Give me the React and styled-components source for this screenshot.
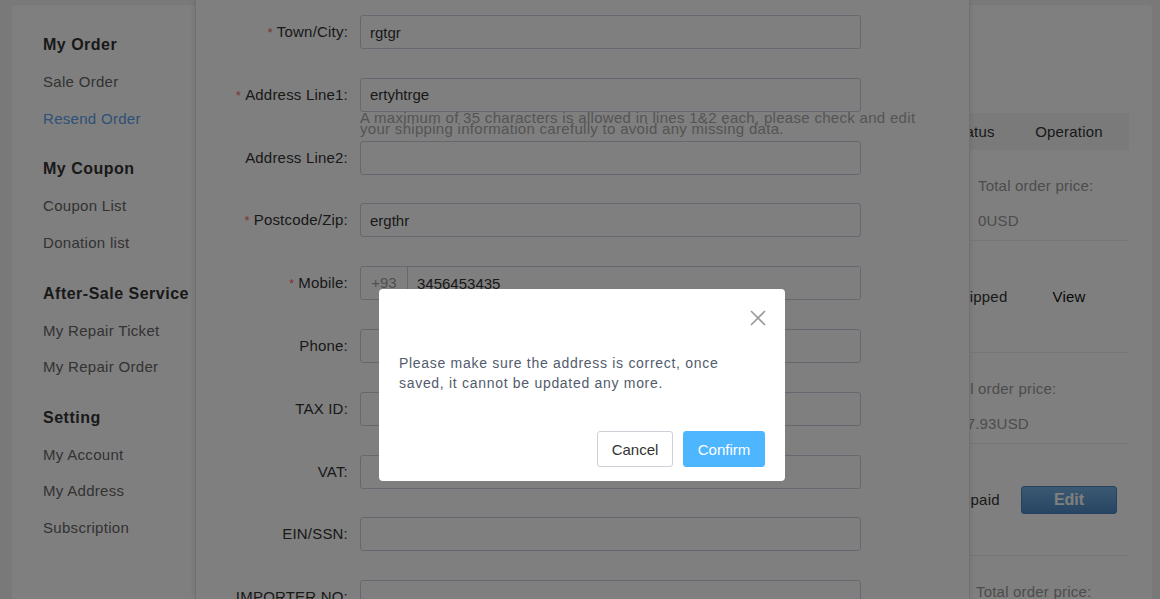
import React from "react";
import styled, { createGlobalStyle } from "styled-components";

const GlobalStyle = createGlobalStyle`
  html, body {
    margin: 0;
    height: 100%;
  }
  body {
    font-family: "Liberation Sans", Arial, sans-serif;
    background: #f3f3f3;
    overflow: hidden;
  }
  * {
    box-sizing: border-box;
  }
`;

const Page = styled.div`
  position: relative;
  display: flex;
  gap: 10px;
  height: 100vh;
  padding: 5px 8px 0 12px;
  overflow: hidden;
`;

/* ---------- sidebar ---------- */

const Sidebar = styled.nav`
  flex: none;
  width: 183px;
  background: #fff;
  border-radius: 4px 4px 0 0;
  padding: 30px 0 0 31px;
`;

const Section = styled.div`
  margin-bottom: 22.3px;
`;

const SectionTitle = styled.h3`
  margin: 0 0 9px;
  font-size: 16px;
  line-height: 20px;
  font-weight: 700;
  letter-spacing: 0.5px;
  color: #333;
  white-space: nowrap;
`;

const NavItem = styled.a`
  display: block;
  height: 36.5px;
  line-height: 36.5px;
  font-size: 15px;
  letter-spacing: 0.3px;
  color: ${props => (props.$active ? "#5aa2ee" : "#666")};
  text-decoration: none;
  white-space: nowrap;
`;

/* ---------- order list card ---------- */

const MainCard = styled.main`
  flex: 1;
  background: #fff;
  border-radius: 4px 4px 0 0;
  padding: 0 23px 0 24px;
`;

const CardTop = styled.div`
  height: 108px;
  padding-top: 30px;
  font-size: 18px;
  color: #333;
`;

const TableHead = styled.div`
  display: grid;
  grid-template-columns: 1fr 58px 120px;
  align-items: center;
  height: 37px;
  background: #f5f5f5;
  font-size: 15px;
  color: #333;
  letter-spacing: 0.2px;
`;

const HeadCell = styled.div`
  text-align: ${props => (props.$left ? "left" : "center")};
`;

const PriceBlock = styled.div`
  padding: 18px 0 2px ${props => props.$indent}px;
  border-bottom: 1px solid #eee;
  font-size: 15px;
  line-height: 35px;
  color: #999;
  letter-spacing: 0.2px;
`;

const StatusRow = styled.div`
  display: grid;
  grid-template-columns: 1fr 58px 120px;
  align-items: center;
  height: 112px;
  border-bottom: 1px solid #eee;
  font-size: 15px;
  color: #333;
  letter-spacing: 0.2px;
`;

const Cell = styled.div`
  display: flex;
  justify-content: ${props => (props.$left ? "flex-start" : "center")};
  white-space: nowrap;
  color: ${props => (props.$strong ? "#111" : "#333")};
`;

const EditButton = styled.button`
  width: 96px;
  height: 28px;
  border: 1px solid #4a86bd;
  border-radius: 3px;
  background: linear-gradient(#78b2e6, #4f8cc6);
  color: #fff;
  font-family: inherit;
  font-size: 16px;
  font-weight: 700;
`;

/* ---------- address form panel (lies over the list) ---------- */

const FormPanel = styled.section`
  position: absolute;
  top: 0;
  left: 195px;
  width: 775px;
  height: 100%;
  background: #fff;
  border-left: 1px solid #e2e2e2;
  border-right: 1px solid #e2e2e2;
  box-shadow: 0 0 6px rgba(0, 0, 0, 0.12);
  padding-top: 15px;
`;

const FieldRow = styled.div`
  display: flex;
  align-items: flex-start;
  gap: 12px;
  height: 62.8px;
`;

const Label = styled.label`
  flex: none;
  width: 152px;
  text-align: right;
  line-height: 34px;
  font-size: 15px;
  letter-spacing: 0.2px;
  color: #333;
  white-space: nowrap;
`;

const Star = styled.span`
  color: #f56c6c;
  font-size: 13px;
  margin-right: 4px;
`;

const Field = styled.div`
  width: 501px;
`;

const TextInput = styled.input`
  display: block;
  width: 100%;
  height: 34px;
  border: 1px solid #c9d1df;
  border-radius: 3px;
  padding: 0 9px;
  font-family: inherit;
  font-size: 15px;
  color: #333;
  background: #fff;
  outline: none;
`;

const Tip = styled.p`
  width: 580px;
  margin: 0;
  font-size: 15px;
  line-height: 11px;
  color: #a9a9a9;
  letter-spacing: 0.3px;
`;

const PhoneGroup = styled.div`
  display: flex;
  height: 34px;
  border: 1px solid #c9d1df;
  border-radius: 3px;
  overflow: hidden;
`;

const Prefix = styled.span`
  flex: none;
  width: 47px;
  border-right: 1px solid #c9d1df;
  line-height: 32px;
  text-align: center;
  font-size: 15px;
  color: #a0a0a0;
`;

const PhoneInput = styled(TextInput)`
  height: 32px;
  border: none;
  border-radius: 0;
  padding-left: 9px;
`;

/* ---------- confirm dialog ---------- */

const Mask = styled.div`
  position: fixed;
  inset: 0;
  z-index: 10;
  display: flex;
  justify-content: center;
  align-items: flex-start;
  padding: 289px 0 0 4px;
  background: rgba(0, 0, 0, 0.5);
`;

const Dialog = styled.div`
  width: 406px;
  background: #fff;
  border-radius: 4px;
  padding: 21px 20px 14px;
`;

const DialogHead = styled.div`
  display: flex;
  justify-content: flex-end;
  height: 16px;
  margin-right: -1px;
`;

const CloseButton = styled.button`
  width: 16px;
  height: 16px;
  padding: 0;
  border: none;
  background: none;
  line-height: 0;
`;

const Message = styled.p`
  margin: 28px 0 38px;
  padding-right: 16px;
  font-size: 14px;
  line-height: 19.5px;
  letter-spacing: 0.7px;
  color: #525c6c;
`;

const DialogFoot = styled.div`
  display: flex;
  justify-content: flex-end;
  gap: 10px;
`;

const DialogButton = styled.button`
  width: ${props => (props.$primary ? 82 : 76)}px;
  height: 36px;
  border-radius: 3px;
  border: 1px solid ${props => (props.$primary ? "#4db6ff" : "#cdd1d8")};
  background: ${props => (props.$primary ? "#4db6ff" : "#fff")};
  color: ${props => (props.$primary ? "#fff" : "#333")};
  font-family: inherit;
  font-size: 15px;
`;

const menu = [
  { title: "My Order", items: ["Sale Order", "Resend Order"] },
  { title: "My Coupon", items: ["Coupon List", "Donation list"] },
  { title: "After-Sale Service", items: ["My Repair Ticket", "My Repair Order"] },
  { title: "Setting", items: ["My Account", "My Address", "Subscription"] }
];

const fields = [
  { label: "Town/City:", value: "rgtgr", required: true },
  {
    label: "Address Line1:",
    value: "ertyhtrge",
    required: true,
    tip:
      "A maximum of 35 characters is allowed in lines 1&2 each, please check and edit your shipping information carefully to avoid any missing data."
  },
  { label: "Address Line2:", value: "" },
  { label: "Postcode/Zip:", value: "ergthr", required: true },
  { label: "Mobile:", value: "3456453435", required: true, prefix: "+93" },
  { label: "Phone:", value: "" },
  { label: "TAX ID:", value: "" },
  { label: "VAT:", value: "" },
  { label: "EIN/SSN:", value: "" },
  { label: "IMPORTER NO:", value: "" }
];

const CloseIcon = () => (
  <svg width="16" height="16" viewBox="0 0 16 16">
    <path d="M1 1L15 15M15 1L1 15" stroke="#999" strokeWidth="1.6" fill="none" />
  </svg>
);

const App = () => (
  <>
    <GlobalStyle />
    <Page>
      <Sidebar>
        {menu.map(section => (
          <Section key={section.title}>
            <SectionTitle>{section.title}</SectionTitle>
            {section.items.map(item => (
              <NavItem key={item} $active={item === "Resend Order"}>
                {item}
              </NavItem>
            ))}
          </Section>
        ))}
      </Sidebar>

      <MainCard>
        <CardTop>Resend Order</CardTop>
        <TableHead>
          <HeadCell>Order Info</HeadCell>
          <HeadCell $left>Status</HeadCell>
          <HeadCell>Operation</HeadCell>
        </TableHead>
        <PriceBlock $indent={749}>
          Total order price:
          <br />
          0USD
        </PriceBlock>
        <StatusRow>
          <Cell />
          <Cell $left>Shipped</Cell>
          <Cell $strong>View</Cell>
        </StatusRow>
        <PriceBlock $indent={712}>
          Total order price:
          <br />
          $127.93USD
        </PriceBlock>
        <StatusRow>
          <Cell />
          <Cell $left>Unpaid</Cell>
          <Cell>
            <EditButton>Edit</EditButton>
          </Cell>
        </StatusRow>
        <PriceBlock $indent={747}>
          Total order price:
          <br />
          0USD
        </PriceBlock>
      </MainCard>

      <FormPanel>
        {fields.map(f => (
          <FieldRow key={f.label}>
            <Label>
              {f.required && <Star>*</Star>}
              {f.label}
            </Label>
            <Field>
              {f.prefix ? (
                <PhoneGroup>
                  <Prefix>{f.prefix}</Prefix>
                  <PhoneInput readOnly value={f.value} />
                </PhoneGroup>
              ) : (
                <TextInput readOnly value={f.value} />
              )}
              {f.tip && <Tip>{f.tip}</Tip>}
            </Field>
          </FieldRow>
        ))}
      </FormPanel>
    </Page>

    <Mask>
      <Dialog>
        <DialogHead>
          <CloseButton aria-label="Close">
            <CloseIcon />
          </CloseButton>
        </DialogHead>
        <Message>
          Please make sure the address is correct, once saved, it cannot be
          updated any more.
        </Message>
        <DialogFoot>
          <DialogButton>Cancel</DialogButton>
          <DialogButton $primary>Confirm</DialogButton>
        </DialogFoot>
      </Dialog>
    </Mask>
  </>
);

export default App;
